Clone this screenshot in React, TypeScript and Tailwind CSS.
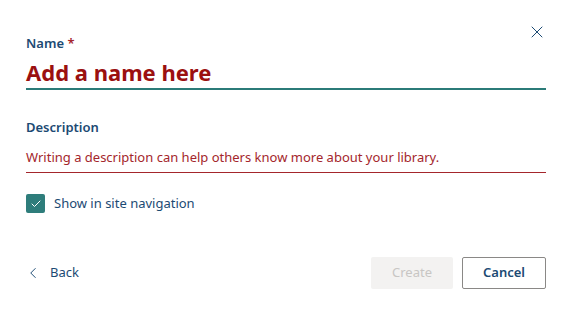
import { Check, ChevronLeft, X } from 'lucide-react';

export default function App() {
  return (
    <div
      className="relative h-[314px] w-[569px] bg-white pl-[26px] pr-[23px] pt-[34px] text-[#1c4a73]"
      style={{ fontFamily: '"Noto Sans", "Open Sans", sans-serif' }}
    >
      <button className="absolute right-[22px] top-[22px] text-[#1c4a73]">
        <X className="h-[20px] w-[20px]" strokeWidth={1.2} />
      </button>

      {/* Name field */}
      <div className="flex flex-col">
        <label className="text-[13px] font-semibold leading-[18px]">
          Name <span className="text-[#a4262c]">*</span>
        </label>
        <div className="mt-[6px] border-b-2 border-[#2b7b78] pb-[1px] text-[22px] font-bold leading-[29px] text-[#9b1010]">
          Add a name here
        </div>
      </div>

      {/* Description field */}
      <div className="mt-[28px] flex flex-col">
        <label className="text-[13px] font-semibold leading-[18px]">Description</label>
        <div className="mt-[12px] border-b border-[#a4262c] pb-[5px] text-[13px] leading-[19px] text-[#a4262c]">
          Writing a description can help others know more about your library.
        </div>
      </div>

      {/* Checkbox */}
      <div className="mt-[21px] flex items-center gap-[9px]">
        <span className="flex h-[19px] w-[19px] items-center justify-center rounded-[2px] bg-[#2e7d7b]">
          <Check className="h-[12px] w-[12px] text-white" strokeWidth={2} />
        </span>
        <span className="text-[13px] text-[#1c4a73]">Show in site navigation</span>
      </div>

      {/* Footer */}
      <div className="mt-[43px] flex items-center justify-between">
        <button className="flex items-center gap-[8px] pl-[-2px] text-[13px] text-[#1c4a73]">
          <ChevronLeft className="-ml-[2px] h-[18px] w-[18px]" strokeWidth={1.3} />
          Back
        </button>
        <div className="flex gap-[9px]">
          <button className="h-[32px] w-[82px] rounded-[2px] bg-[#f3f2f1] text-[13px] text-[#c8c6c4]">
            Create
          </button>
          <button className="h-[32px] w-[84px] rounded-[2px] border border-[#8a8886] bg-white text-[13px] font-semibold text-[#1c4a73]">
            Cancel
          </button>
        </div>
      </div>
    </div>
  );
}
